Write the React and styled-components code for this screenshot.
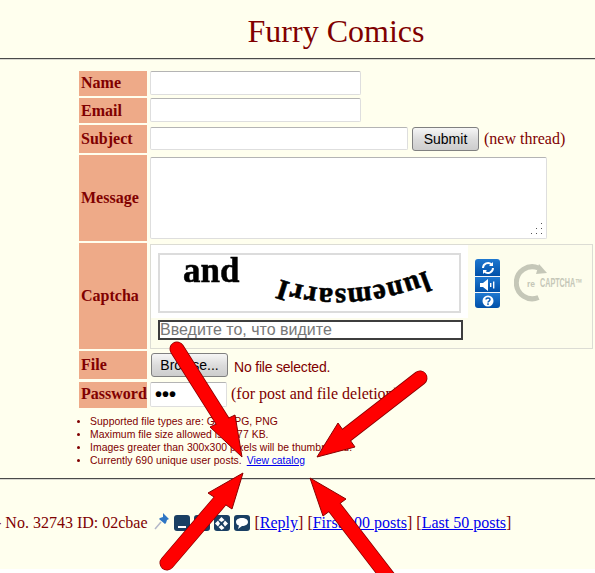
import React from "react";
import styled, { createGlobalStyle } from "styled-components";

const Global = createGlobalStyle`
  html, body { margin: 0; padding: 0; height: 573px; overflow: hidden; background: #ffffee; }
  body { font-family: "Liberation Serif", serif; color: #800000; }
`;
const Page = styled.div`width: 595px; height: 573px; overflow: hidden; position: relative; background: linear-gradient(#ffffee 569px, #ffffff 569px);`;
const Title = styled.h1`margin: 0; height: 58px; padding: 12px 0 0 77px; box-sizing: border-box; text-align: center; font: 400 32px/38px "Liberation Serif", serif; color: #800000;`;
const Rule = styled.hr`margin: 0; height: 2px; border: 0; border-top: 1px solid #4a4a4a; border-bottom: 1px solid #d8d8d0; box-sizing: border-box;`;
const Form = styled.form`display: grid; grid-template-columns: 68px 1fr; gap: 2px 3px; margin: 11px 0 0 79px;`;
const Label = styled.div`box-sizing: border-box; background: #eeaa88; font: 700 16px/18px "Liberation Serif", serif; color: #800000; display: flex; align-items: center; padding: 0 2px ${p => p.$nudge || 0}px; height: ${p => p.$h}px;`;
const Field = styled.div`display: flex; align-items: flex-start; gap: ${p => p.$gap || 5}px; padding-top: ${p => p.$pt || 0}px;`;
const TextInput = styled.input`box-sizing: border-box; width: ${p => p.$w}px; height: ${p => p.$h || 24}px; margin: 0; background: #fff; border: 1px solid #dedede; border-top-color: #b4b4b4; border-radius: 2px; padding: 1px 4px; font: 700 20px/20px "Liberation Sans", sans-serif; color: #000;`;
const TextAreaWrap = styled.div`position: relative; width: 397px; height: 82px; margin-top: 2px;`;
const TextArea = styled.textarea`display: block; box-sizing: border-box; width: 100%; height: 100%; margin: 0; background: #fff; border: 1px solid #dedede; border-top-color: #b4b4b4; border-radius: 2px; resize: none;`;
const Grip = styled.svg`position: absolute; right: 5px; bottom: 5px; width: 11px; height: 11px;`;
const PushButton = styled.button`box-sizing: border-box; width: ${p => p.$w}px; height: 24px; padding: 0; margin: ${p => p.$mt || 0}px 0 0 ${p => p.$ml || 0}px; border: 1px solid #808080; border-radius: 3px; background: linear-gradient(#f6f6f6, #dcdcdc 50%, #cdcdcd); font: 14px "Liberation Sans", sans-serif; color: #000;`;
const Note = styled.span`font: 16px/24px "Liberation Serif", serif; color: #800000; margin-left: ${p => p.$ml || 0}px; white-space: nowrap;`;
const NoFile = styled.span`font: 14px/26px "Liberation Sans", sans-serif; letter-spacing: -.2px; color: #800000; margin-top: 3px;`;
const CaptchaBox = styled.div`box-sizing: border-box; width: 443px; height: 105px; margin-top: 1px; border: 1px solid #dcdcd4; background: #fdfdec; display: grid; grid-template-columns: 317px 1fr;`;
const CaptchaMain = styled.div`display: flex; flex-direction: column;`;
const CaptchaWhite = styled.div`background: #fff; padding: 8px 6px 5px 7px; height: 73px; box-sizing: border-box;`;
const CaptchaImage = styled.svg`display: block; box-sizing: border-box; width: 303px; height: 60px; border: 2px solid #dcdcdc; background: #fff; overflow: visible;`;
const CaptchaInput = styled.input`box-sizing: border-box; width: 305px; height: 20px; margin: 2px 0 0 7px; background: #fff; border: 2px solid #3d3d3d; padding: 0; font: 16px/16px "Liberation Sans", sans-serif; &::placeholder { color: #777; opacity: 1; }`;
const CaptchaSide = styled.div`display: flex; align-items: flex-start; gap: 14px; padding: 14px 0 0 7px;`;
const CaptchaButtons = styled.div`width: 25px; height: 49px; border-radius: 3px; overflow: hidden; display: grid; grid-template-rows: 17px 15px 1fr; gap: 1px; background: #f4f6fa;`;
const CaptchaBtn = styled.div`background: linear-gradient(#1f78d0, #0050a8); display: flex; align-items: center; justify-content: center;`;
const Logo = styled.svg`width: 72px; height: 38px; margin-top: 5px; flex: none;`;
const Rules = styled.ul`margin: 7px 0 0 90px; padding: 0; list-style: disc; font: 10.4px/13px "Liberation Sans", sans-serif; color: #800000; letter-spacing: .05px; & li { height: 13px; white-space: nowrap; } & a { color: #0000ee; margin-left: 2px; letter-spacing: 0; font-size: 10.3px; }`;
const RuleLow = styled(Rule)`margin-top: 11px;`;
const PostLine = styled.div`display: flex; align-items: center; height: 20px; margin: 33px 0 0 -4px; font: 16px/20px "Liberation Serif", serif; color: #800000; white-space: nowrap; & a { color: #0000ee; text-decoration: underline; }`;
const Tool = styled.span`display: inline-flex; width: 16px; height: 16px; margin-right: 4px; background: #1a3f63; border-radius: 3px; align-items: center; justify-content: center; flex: none;`;
const Pin = styled.svg`width: 16px; height: 18px; margin: -4px 4px 0 6px; flex: none;`;
const Links = styled.span`margin-left: 1px; display: inline-flex; gap: 4px;`;
const Overlay = styled.svg`position: absolute; left: 0; top: 0; pointer-events: none;`;

function Arrow({ tail, tip, a, b }) {
  const head = `${tip.join(",")} ${a.join(",")} ${b.join(",")}`;
  const mid = [(a[0] + b[0]) / 2, (a[1] + b[1]) / 2];
  return (
    <g>
      <line x1={tail[0]} y1={tail[1]} x2={mid[0]} y2={mid[1]} stroke="#8a0000" strokeWidth="15" strokeLinecap="round" />
      <polygon points={head} fill="#ff0000" stroke="#8a0000" strokeWidth="1" />
      <line x1={tail[0]} y1={tail[1]} x2={mid[0]} y2={mid[1]} stroke="#ff0000" strokeWidth="13.500" strokeLinecap="round" />
    </g>
  );
}

export default function App() {
  return (
    <Page>
      <Global />
      <Title>Furry Comics</Title>
      <Rule />
      <Form onSubmit={e => e.preventDefault()}>
        <Label $h={25} $nudge={2}>Name</Label>
        <Field><TextInput $w={211} /></Field>
        <Label $h={25}>Email</Label>
        <Field><TextInput $w={211} /></Field>
        <Label $h={28}>Subject</Label>
        <Field $gap={4} $pt={2}><TextInput $w={258} $h={23} /><PushButton $w={67}>Submit</PushButton><Note $ml={1}>(new thread)</Note></Field>
        <Label $h={86}>Message</Label>
        <Field>
          <TextAreaWrap>
            <TextArea />
            <Grip viewBox="0 0 11 11" fill="#555">
              <rect x="10" y="0" width="1" height="1" /><rect x="10" y="5" width="1" height="1" /><rect x="10" y="10" width="1" height="1" />
              <rect x="5" y="5" width="1" height="1" /><rect x="5" y="10" width="1" height="1" /><rect x="0" y="10" width="1" height="1" />
            </Grip>
          </TextAreaWrap>
        </Field>
        <Label $h={106}>Captcha</Label>
        <Field>
          <CaptchaBox>
            <CaptchaMain>
              <CaptchaWhite>
                <CaptchaImage viewBox="0 0 299 56">
                  <defs>
                    <path id="warp" d="M266 16 C230 30 195 36 160 33 C135 30 115 24 98 14" />
                    <filter id="soft"><feGaussianBlur stdDeviation=".5" /></filter>
                  </defs>
                  <text x="23" y="27" fontFamily="Liberation Serif" fontWeight="700" fontSize="35" fill="#000" stroke="#000" strokeWidth=".5" filter="url(#soft)">and</text>
                  <text fontFamily="Liberation Serif" fontWeight="700" fontSize="29" letterSpacing="1" fill="#000" stroke="#000" strokeWidth=".6">
                    <textPath href="#warp">lunemsarrI</textPath>
                  </text>
                </CaptchaImage>
              </CaptchaWhite>
              <CaptchaInput placeholder="Введите то, что видите" />
            </CaptchaMain>
            <CaptchaSide>
              <CaptchaButtons>
                <CaptchaBtn>
                  <svg width="14" height="14" viewBox="0 0 14 14" fill="none" stroke="#fff" strokeWidth="2"><path d="M2 7a5 5 0 0 1 8.500-3.500" /><path d="M12 7a5 5 0 0 1-8.500 3.500" /><path d="M12 1v4H8zM2 13V9h4z" fill="#fff" stroke="none" /></svg>
                </CaptchaBtn>
                <CaptchaBtn>
                  <svg width="16" height="12" viewBox="0 0 16 12" fill="#fff"><path d="M0 4h3l5-4v12l-5-4H0z" /><rect x="10" y="4" width="1.400" height="4" /><rect x="13" y="2.500" width="1.400" height="7" /></svg>
                </CaptchaBtn>
                <CaptchaBtn>
                  <svg width="12" height="12" viewBox="0 0 12 12"><circle cx="6" cy="6" r="5.500" fill="#fff" /><path d="M4 4.600c0-2.300 4-2.300 4 0 0 1.500-2 1.400-2 3" fill="none" stroke="#0a5cb4" strokeWidth="1.500" /><rect x="5.200" y="8.300" width="1.600" height="1.600" fill="#0a5cb4" /></svg>
                </CaptchaBtn>
              </CaptchaButtons>
              <Logo viewBox="0 0 72 38">
                <path d="M24.500 33.500A16 16 0 1 1 24.500 4" fill="none" stroke="#c5c7b8" strokeWidth="5" />
                <path d="M25 0l8 9-11 1z" fill="#c5c7b8" />
                <text x="13" y="23" fontFamily="Liberation Sans" fontWeight="700" fontSize="8.500" fill="#c5c7b8">re</text>
                <text transform="translate(26 23) scale(.6 1)" fontFamily="Liberation Sans" fontWeight="700" fontSize="12" fill="#c5c7b8">CAPTCHA™</text>
              </Logo>
            </CaptchaSide>
          </CaptchaBox>
        </Field>
        <Label $h={28}>File</Label>
        <Field $gap={6}><PushButton $w={77} $mt={2} $ml={1}>Browse...</PushButton><NoFile>No file selected.</NoFile></Field>
        <Label $h={26} $nudge={2}>Password</Label>
        <Field $gap={4}><TextInput $w={77} $h={25} type="password" defaultValue="abc" /><Note>(for post and file deletion)</Note></Field>
      </Form>
      <Rules>
        <li>Supported file types are: GIF, JPG, PNG</li>
        <li>Maximum file size allowed is 2577 KB.</li>
        <li>Images greater than 300x300 pixels will be thumbnailed.</li>
        <li>Currently 690 unique user posts. <a href="#catalog">View catalog</a></li>
      </Rules>
      <RuleLow />
      <PostLine>
        <span>- No. 32743 ID: 02cbae</span>
        <Pin viewBox="0 0 16 18">
          <path d="M1 17l6-7" stroke="#b4b8c8" strokeWidth="1.500" />
          <path d="M9 1l6 6-2 1-1 3-1 1-6-5 1-1 3-1z" fill="#2f76c4" />
        </Pin>
        <Tool><svg width="10" height="10" viewBox="0 0 10 10"><rect x="1" y="8" width="8" height="2" fill="#fff" /></svg></Tool>
        <Tool><svg width="12" height="12" viewBox="0 0 12 12" fill="none" stroke="#fff" strokeWidth="1.500"><path d="M3 9a4 4 0 0 1 6-6" /></svg></Tool>
        <Tool><svg width="15" height="15" viewBox="0 0 15 15" fill="#fff"><path d="M7.500 1l3 3-3 2-3-2zM7.500 14l-3-3 3-2 3 3zM1 7.500l3-3 2 3-2 3zM14 7.500l-3 3-2-3 2-3z" /></svg></Tool>
        <Tool><svg width="14" height="14" viewBox="0 0 14 14" fill="#fff"><path d="M7 2c3.500 0 6 1.600 6 4s-2.500 4-6 4l-4 3 1-3.500C2 9 1 7.500 1 6c0-2.400 2.500-4 6-4z" /></svg></Tool>
        <Links>
          <span>[<a href="#reply">Reply</a>]</span>
          <span>[<a href="#first">First 100 posts</a>]</span>
          <span>[<a href="#last">Last 50 posts</a>]</span>
        </Links>
      </PostLine>
      <Overlay width="595" height="573" viewBox="0 0 595 573">
        <Arrow tail={[177, 349]} tip={[242, 457]} a={[210, 427]} b={[235, 415]} />
        <Arrow tail={[420, 378]} tip={[317, 457]} a={[338, 423]} b={[355, 447]} />
        <Arrow tail={[167, 563]} tip={[243, 473]} a={[208, 493]} b={[232, 509]} />
        <Arrow tail={[398, 590]} tip={[310, 478]} a={[346, 499]} b={[323, 516]} />
      </Overlay>
    </Page>
  );
}
